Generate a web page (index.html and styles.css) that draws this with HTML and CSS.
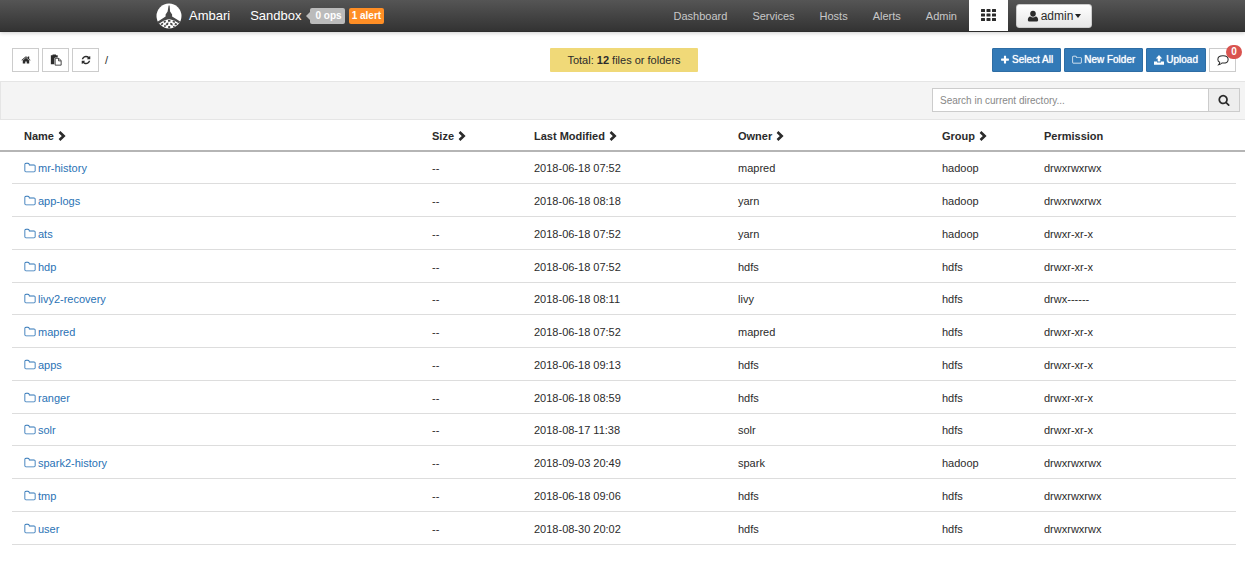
FILE: index.html
```html
<!DOCTYPE html>
<html lang="en">
<head>
<meta charset="utf-8">
<meta name="viewport" content="width=device-width, initial-scale=1">
<title>Ambari - Sandbox</title>
<link rel="stylesheet" href="styles.css">
</head>
<body>
<svg class="sprite" aria-hidden="true">
  <symbol id="folder" viewBox="0 0 1792 1792"><path d="M1600 1312v-704q0-40-28-68t-68-28h-704q-40 0-68-28t-28-68v-64q0-40-28-68t-68-28h-320q-40 0-68 28t-28 68v960q0 40 28 68t68 28h1216q40 0 68-28t28-68zm128-704v704q0 92-66 158t-158 66h-1216q-92 0-158-66t-66-158v-960q0-92 66-158t158-66h320q92 0 158 66t66 158v32h672q92 0 158 66t66 158z"/></symbol>
  <symbol id="plus" viewBox="0 0 1792 1792"><path d="M1600 736v192q0 40-28 68t-68 28h-416v416q0 40-28 68t-68 28h-192q-40 0-68-28t-28-68v-416h-416q-40 0-68-28t-28-68v-192q0-40 28-68t68-28h416v-416q0-40 28-68t68-28h192q40 0 68 28t28 68v416h416q40 0 68 28t28 68z"/></symbol>
  <symbol id="home" viewBox="0 0 1792 1792"><path d="M1472 992v480q0 26-19 45t-45 19h-384v-384h-256v384h-384q-26 0-45-19t-19-45v-480q0-1 .5-3t.5-3l575-474 575 474q1 2 1 6zm223-69l-62 74q-8 9-21 11h-3q-13 0-21-7l-692-577-692 577q-12 8-24 7-13-2-21-11l-62-74q-8-10-7-23.5t11-21.5l719-599q32-26 76-26t76 26l244 204v-195q0-14 9-23t23-9h192q14 0 23 9t9 23v408l219 182q10 8 11 21.5t-7 23.5z"/></symbol>
  <symbol id="refresh" viewBox="0 0 1792 1792"><path d="M1639 1056q0 5-1 7-64 268-268 434.5t-478 166.5q-146 0-282.5-55t-243.5-157l-129 129q-19 19-45 19t-45-19-19-45v-448q0-26 19-45t45-19h448q26 0 45 19t19 45-19 45l-137 137q71 66 161 102t187 36q134 0 250-65t186-179q11-17 53-117 8-23 30-23h192q13 0 22.5 9.5t9.5 22.5zm25-800v448q0 26-19 45t-45 19h-448q-26 0-45-19t-19-45 19-45l138-138q-148-137-349-137-134 0-250 65t-186 179q-11 17-53 117-8 23-30 23h-199q-13 0-22.5-9.5t-9.5-22.5v-7q65-268 270-434.5t480-166.5q146 0 284 55.5t245 156.5l130-129q19-19 45-19t45 19 19 45z"/></symbol>
  <symbol id="search" viewBox="0 0 1792 1792"><path d="M1216 832q0-185-131.5-316.5t-316.5-131.5-316.5 131.5-131.5 316.5 131.5 316.5 316.5 131.5 316.5-131.5 131.5-316.5zm512 832q0 52-38 90t-90 38q-54 0-90-38l-343-342q-179 124-399 124-143 0-273.5-55.5t-225-150-150-225-55.5-273.5 55.5-273.5 150-225 225-150 273.5-55.5 273.5 55.5 225 150 150 225 55.5 273.5q0 220-124 399l343 343q37 37 37 90z"/></symbol>
  <symbol id="chevron" viewBox="0 0 8 10"><path d="M1.500 1 5.700 5 1.500 9" fill="none" stroke="currentColor" stroke-width="2.600"/></symbol>
  <symbol id="paste" viewBox="0 0 14 14"><path d="M1 1.500h2V.5h4v1h2V4H6L5 5v7H1z"/><path d="M6 5h4v3h3v5H6zM10.300 5 13 7.700" fill="#fff" stroke="currentColor"/></symbol>
  <symbol id="upload" viewBox="0 0 14 14"><path d="M7 0l4.500 4.800H8.800V9H5.200V4.800H2.500zM0 9h4.200v1.500h5.600V9H14v4.500H0z"/></symbol>
  <symbol id="comment" viewBox="0 0 14 14"><path d="M7 2c3.500 0 6 1.800 6 4.300s-2.500 4.300-6 4.300l-1.200-.1C4.800 11.600 3.500 12.300 2 12.500c.7-.7 1.100-1.500 1.200-2.800C1.800 8.900 1 7.700 1 6.300 1 3.800 3.500 2 7 2z" fill="none" stroke="currentColor" stroke-width="1.200"/></symbol>
  <symbol id="user" viewBox="0 0 14 14"><path d="M7 1c2 0 3.300 1.500 3.300 3.500S8.800 8 7 8 3.700 6.500 3.700 4.500 5 1 7 1zM4 7.500c1.800 1.700 4.200 1.700 6 0 2.300.2 3 2 3 4.200 0 1-.7 1.800-1.700 1.800H2.700C1.700 13.500 1 12.700 1 11.700c0-2.200.7-4 3-4.200z"/></symbol>
  <symbol id="grid" viewBox="0 0 15 12"><path d="M1 0h2.500q.5 0 .5.500v2q0 .5-.5.500H.5Q0 3 0 2.500v-2Q0 0 .5 0zM6 0h3q.5 0 .5.500v2q0 .5-.5.500H6q-.5 0-.5-.5v-2Q5.500 0 6 0zM11.500 0h3q.5 0 .5.500v2q0 .5-.5.500h-3q-.5 0-.5-.5v-2q0-.5.500-.5zM.5 4.500h3q.5 0 .5.500v2q0 .5-.5.500h-3Q0 7.500 0 7V5q0-.5.500-.5zM6 4.500h3q.5 0 .5.500v2q0 .5-.5.500H6q-.5 0-.5-.5V5q0-.5.500-.5zM11.500 4.500h3q.5 0 .5.500v2q0 .5-.5.500h-3q-.5 0-.5-.5V5q0-.5.500-.5zM.5 9h3q.5 0 .5.500v2q0 .5-.5.500h-3Q0 12 0 11.500v-2Q0 9 .5 9zM6 9h3q.5 0 .5.500v2q0 .5-.5.500H6q-.5 0-.5-.5v-2Q5.500 9 6 9zM11.500 9h3q.5 0 .5.500v2q0 .5-.5.500h-3q-.5 0-.5-.5v-2q0-.5.500-.5z"/></symbol>
</svg>

<header class="topbar">
  <div class="topbar-inner">
    <a class="brand" href="#">
      <svg class="logo" viewBox="0 0 26 26" aria-hidden="true">
        <circle cx="13" cy="13" r="12.500" fill="#fff"/>
        <g fill="#484848">
          <path d="M12.600 2.500h1l.5 6 2 3v2l4.500 2.700 3.500 2.300-1 2-4.500-2.800-5.500-1.700-5.500 1.700-5.500 3.500-1-2.200 3.500-2.200 5-3.300v-2l2-3z"/>
          <path d="M7.500 18.300l2-.8.5 1.500-2 1zM12 16.800h2.400v2H12zM17 17.600l2.200.8-.7 1.500-2-.8zM4.500 21l2.300-1.300.6 1.400-1.700 1.500zM10.500 20l2-.4-.5 2.500-2.200.5zM14 19.700l2.200.5.700 2.300-2.300-.4zM19 20l2.500.8-1.300 1.800-1.700-.8zM8 22.400l1.500-1 .3 2.400-1.300.5zM12.200 22.900h2v2.300h-2zM17 23l1.500-.3.300 1.300-1.400.7z"/>
        </g>
      </svg>
      <span>Ambari</span>
    </a>
    <a class="cluster" href="#">Sandbox</a>
    <a class="label label-ops" href="#">0 ops</a>
    <a class="label label-alert" href="#">1 alert</a>
    <nav class="nav">
      <a href="#">Dashboard</a>
      <a href="#">Services</a>
      <a href="#">Hosts</a>
      <a href="#">Alerts</a>
      <a href="#">Admin</a>
    </nav>
    <button class="views" type="button" aria-label="Views"><svg class="grid-icon"><use href="#grid"/></svg></button>
    <button class="account" type="button"><svg class="icon-large"><use href="#user"/></svg>admin<span class="caret"></span></button>
  </div>
</header>

<main>
  <div class="toolbar">
    <div class="group">
      <button class="btn" type="button" aria-label="Home"><svg class="icon"><use href="#home"/></svg></button>
      <button class="btn" type="button" aria-label="Paste"><svg class="icon-large"><use href="#paste"/></svg></button>
      <button class="btn" type="button" aria-label="Refresh"><svg class="icon"><use href="#refresh"/></svg></button>
      <span class="path">/</span>
    </div>
    <div class="total">Total: <b>12</b> files or folders</div>
    <div class="group group-end">
      <button class="btn btn-primary" type="button"><svg class="icon"><use href="#plus"/></svg>Select All</button>
      <button class="btn btn-primary" type="button"><svg class="icon"><use href="#folder"/></svg>New Folder</button>
      <button class="btn btn-primary" type="button"><svg class="icon"><use href="#upload"/></svg>Upload</button>
      <button class="btn messages" type="button" aria-label="Messages"><svg class="icon-large"><use href="#comment"/></svg><span class="badge">0</span></button>
    </div>
  </div>

  <form class="filter">
    <input class="search-input" type="text" aria-label="Search in current directory" placeholder="Search in current directory...">
    <button class="search-button" type="button" aria-label="Search"><svg class="icon-large"><use href="#search"/></svg></button>
  </form>

  <table class="files">
    <thead>
      <tr>
        <th>Name <svg class="chevron"><use href="#chevron"/></svg></th>
        <th>Size <svg class="chevron"><use href="#chevron"/></svg></th>
        <th>Last Modified <svg class="chevron"><use href="#chevron"/></svg></th>
        <th>Owner <svg class="chevron"><use href="#chevron"/></svg></th>
        <th>Group <svg class="chevron"><use href="#chevron"/></svg></th>
        <th>Permission</th>
      </tr>
    </thead>
    <tbody>
      <tr><td><a href="#"><svg class="folder"><use href="#folder"/></svg>mr-history</a></td><td>--</td><td>2018-06-18 07:52</td><td>mapred</td><td>hadoop</td><td>drwxrwxrwx</td></tr>
      <tr><td><a href="#"><svg class="folder"><use href="#folder"/></svg>app-logs</a></td><td>--</td><td>2018-06-18 08:18</td><td>yarn</td><td>hadoop</td><td>drwxrwxrwx</td></tr>
      <tr><td><a href="#"><svg class="folder"><use href="#folder"/></svg>ats</a></td><td>--</td><td>2018-06-18 07:52</td><td>yarn</td><td>hadoop</td><td>drwxr-xr-x</td></tr>
      <tr><td><a href="#"><svg class="folder"><use href="#folder"/></svg>hdp</a></td><td>--</td><td>2018-06-18 07:52</td><td>hdfs</td><td>hdfs</td><td>drwxr-xr-x</td></tr>
      <tr><td><a href="#"><svg class="folder"><use href="#folder"/></svg>livy2-recovery</a></td><td>--</td><td>2018-06-18 08:11</td><td>livy</td><td>hdfs</td><td>drwx------</td></tr>
      <tr><td><a href="#"><svg class="folder"><use href="#folder"/></svg>mapred</a></td><td>--</td><td>2018-06-18 07:52</td><td>mapred</td><td>hdfs</td><td>drwxr-xr-x</td></tr>
      <tr><td><a href="#"><svg class="folder"><use href="#folder"/></svg>apps</a></td><td>--</td><td>2018-06-18 09:13</td><td>hdfs</td><td>hdfs</td><td>drwxr-xr-x</td></tr>
      <tr><td><a href="#"><svg class="folder"><use href="#folder"/></svg>ranger</a></td><td>--</td><td>2018-06-18 08:59</td><td>hdfs</td><td>hdfs</td><td>drwxr-xr-x</td></tr>
      <tr><td><a href="#"><svg class="folder"><use href="#folder"/></svg>solr</a></td><td>--</td><td>2018-08-17 11:38</td><td>solr</td><td>hdfs</td><td>drwxr-xr-x</td></tr>
      <tr><td><a href="#"><svg class="folder"><use href="#folder"/></svg>spark2-history</a></td><td>--</td><td>2018-09-03 20:49</td><td>spark</td><td>hadoop</td><td>drwxrwxrwx</td></tr>
      <tr><td><a href="#"><svg class="folder"><use href="#folder"/></svg>tmp</a></td><td>--</td><td>2018-06-18 09:06</td><td>hdfs</td><td>hdfs</td><td>drwxrwxrwx</td></tr>
      <tr><td><a href="#"><svg class="folder"><use href="#folder"/></svg>user</a></td><td>--</td><td>2018-08-30 20:02</td><td>hdfs</td><td>hdfs</td><td>drwxrwxrwx</td></tr>
    </tbody>
  </table>
</main>
</body>
</html>
```
FILE: styles.css
```css
* { box-sizing: border-box; }

body {
  margin: 0;
  background: #fff;
  color: #2b2b2b;
  font: 11px/16px "Liberation Sans", Arial, sans-serif;
}

a { color: #2a72b5; text-decoration: none; }
button, input { font: inherit; color: inherit; margin: 0; }
button { cursor: pointer; }
svg { fill: currentColor; flex: none; }
.sprite { display: none; }
.icon { width: 10px; height: 10px; }
.icon-large { width: 12px; height: 12px; }

/* Top bar */
.topbar {
  background: linear-gradient(#555, #333);
  border-bottom: 1px solid #2d2d2d;
  box-shadow: 0 1px 4px rgba(0, 0, 0, 0.2);
}

.topbar-inner {
  display: flex;
  align-items: center;
  max-width: 939px;
  height: 31px;
  margin: 0 auto;
  padding-left: 3px;
}

.brand, .cluster { color: #fff; font-size: 13px; }
.brand { display: flex; align-items: center; gap: 7px; margin-right: 20px; }
.logo { width: 26px; height: 26px; }
.cluster { margin-right: 8px; }

.label {
  position: relative;
  padding: 0 3px;
  border-radius: 2px;
  color: #fff;
  font-size: 10px;
  font-weight: bold;
}

.label-ops { margin-right: 4px; padding: 0 3px 0 6px; background: #bbb; }
.label-ops::before {
  content: "";
  position: absolute;
  top: 4px;
  left: -4px;
  border: 4px solid transparent;
  border-right: 4px solid #bbb;
  border-left: 0;
}
.label-alert { background: #ff8e25; }

.nav { display: flex; gap: 25px; margin-left: auto; margin-right: 12px; }
.nav a { color: #c8c8c8; }

.views {
  display: flex;
  justify-content: center;
  align-self: stretch;
  width: 39px;
  margin-right: 8px;
  padding: 9px 0 0;
  border: 0;
  background: #fff;
}
.grid-icon { width: 15px; height: 12px; }

.account {
  display: flex;
  align-items: center;
  justify-content: center;
  gap: 2px;
  width: 76px;
  height: 24px;
  padding: 0;
  border: 1px solid #ccc;
  border-radius: 3px;
  background: linear-gradient(#fff, #e6e6e6);
  font-size: 12px;
}
.caret {
  border: 3px solid transparent;
  border-top: 4px solid #222;
  border-bottom: 0;
}

/* Action bar */
.toolbar {
  display: grid;
  grid-template-columns: 1fr auto 1fr;
  align-items: center;
  padding: 16px 9px 9px 12px;
}

.group { display: flex; align-items: center; gap: 3px; }
.group-end { justify-content: flex-end; }
.path { margin-left: 3px; }

.btn {
  display: flex;
  align-items: center;
  justify-content: center;
  gap: 2px;
  width: 27px;
  height: 24px;
  padding: 0;
  border: 1px solid #ccc;
  background: #fff;
}

.btn-primary {
  width: auto;
  padding: 0 7px;
  border-color: #2e6da4;
  border-radius: 1px;
  background: #337ab7;
  color: #fff;
  font-size: 10px;
  text-shadow: 0 0 1px #fff;
}

.messages { position: relative; }
.badge {
  position: absolute;
  top: -4px;
  right: -7px;
  min-width: 16px;
  border-radius: 7px;
  background: #d9534f;
  color: #fff;
  font-size: 10px;
  font-weight: bold;
  line-height: 14px;
}

.total {
  padding: 4px 17px;
  border-radius: 1px;
  background: #f0d978;
}

.filter {
  display: flex;
  justify-content: flex-end;
  padding: 6px 5px 7px;
  border: 1px solid #e5e5e5;
  border-right: 0;
  background: #f4f4f4;
}

.search-input {
  width: 277px;
  height: 24px;
  padding: 0 7px;
  border: 1px solid #ccc;
  border-radius: 0;
  background: #fff;
  font-size: 10px;
}
.search-input::placeholder { color: #888; opacity: 1; }

.search-button {
  display: flex;
  align-items: center;
  justify-content: center;
  width: 31px;
  padding: 0;
  border: 1px solid #ccc;
  border-left: 0;
  background: #eee;
}

.files, .files thead, .files tbody { display: block; }

.files tr {
  display: grid;
  grid-template-columns: 4fr 1fr 2fr 2fr 1fr 2fr;
  margin: 0 9px 0 12px;
}

.files thead { border-bottom: 2px solid #b5b5b5; }

.files th, .files td {
  padding: 9px 0 7px 12px;
  text-align: left;
  white-space: nowrap;
}

.files th { padding: 8px 0 6px 12px; }
.files tbody tr { border-bottom: 1px solid #ddd; }
.files tbody tr:nth-child(4n + 1) td { padding-top: 8px; }
.files td a { display: flex; align-items: center; gap: 2px; }
.folder { width: 12px; height: 12px; }
.chevron { width: 8px; height: 10px; margin-left: 1px; vertical-align: -1px; }
```
